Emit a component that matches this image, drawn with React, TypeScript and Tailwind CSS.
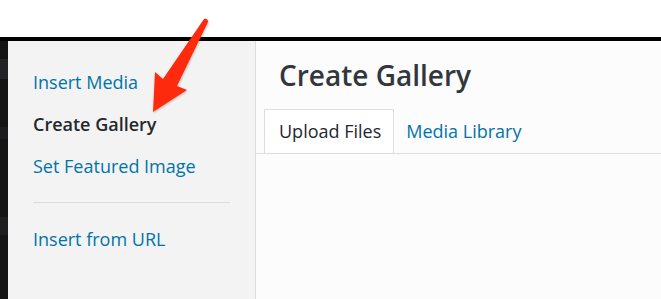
import React from "react";

export default function App() {
  const font = { fontFamily: '"Open Sans", "Noto Sans", sans-serif' };
  return (
    <div className="relative w-[661px] h-[299px] overflow-hidden bg-white" style={font}>
      <div className="h-[37px] bg-white" />
      <div className="h-[4px] bg-black" />
      <div className="flex h-[258px]">
        <div className="w-[8px] bg-[#141414] flex flex-col">
          <div className="h-[20px] mt-[18px] bg-[#232325]" />
          <div className="h-[12px] mt-[48px] bg-[#1c1c1e]" />
          <div className="h-[18px] mt-[78px] bg-[#1e1e20]" />
        </div>
        <div className="w-[248px] bg-[#f3f3f3] border-r border-[#dddddd] pt-[20px]">
          <div className="px-[25px] py-[10px] text-[18px] leading-[22px] text-[#0073aa]">Insert Media</div>
          <div className="px-[25px] py-[10px] text-[18px] leading-[22px] text-[#23282d] font-semibold">Create Gallery</div>
          <div className="px-[25px] py-[10px] text-[18px] leading-[22px] text-[#0073aa]">Set Featured Image</div>
          <div className="mx-[25px] my-[15px] border-t border-[#dddddd]" />
          <div className="px-[25px] py-[10px] text-[18px] leading-[22px] text-[#0073aa]">Insert from URL</div>
        </div>
        <div className="flex-1 bg-[#fcfcfc]">
          <div className="h-[68px] flex items-center px-[23px] text-[28px] font-semibold text-[#32373c]">Create Gallery</div>
          <div className="flex border-b border-[#dddddd] pl-[8px]">
            <div className="pl-[14px] pr-[12px] h-[44px] flex items-center border-t border-l border-r border-[#dddddd] bg-white text-[18px] text-[#23282d] -mb-px">Upload Files</div>
            <div className="px-[12px] h-[44px] flex items-center text-[18px] text-[#0073aa]">Media Library</div>
          </div>
        </div>
      </div>
      <svg className="absolute left-0 top-0" width="661" height="299" viewBox="0 0 661 299">
        <defs>
          <filter id="sh" x="-20%" y="-20%" width="140%" height="140%">
            <feDropShadow dx="0.5" dy="1" stdDeviation="1" floodColor="#000" floodOpacity="0.25" />
          </filter>
        </defs>
        <path d="M204 19 Q208 18 208 22 L177 86 L187 90 L153 112 L155 72 L163 79 Z" fill="#fe2c0a" filter="url(#sh)" />
      </svg>
    </div>
  );
}
